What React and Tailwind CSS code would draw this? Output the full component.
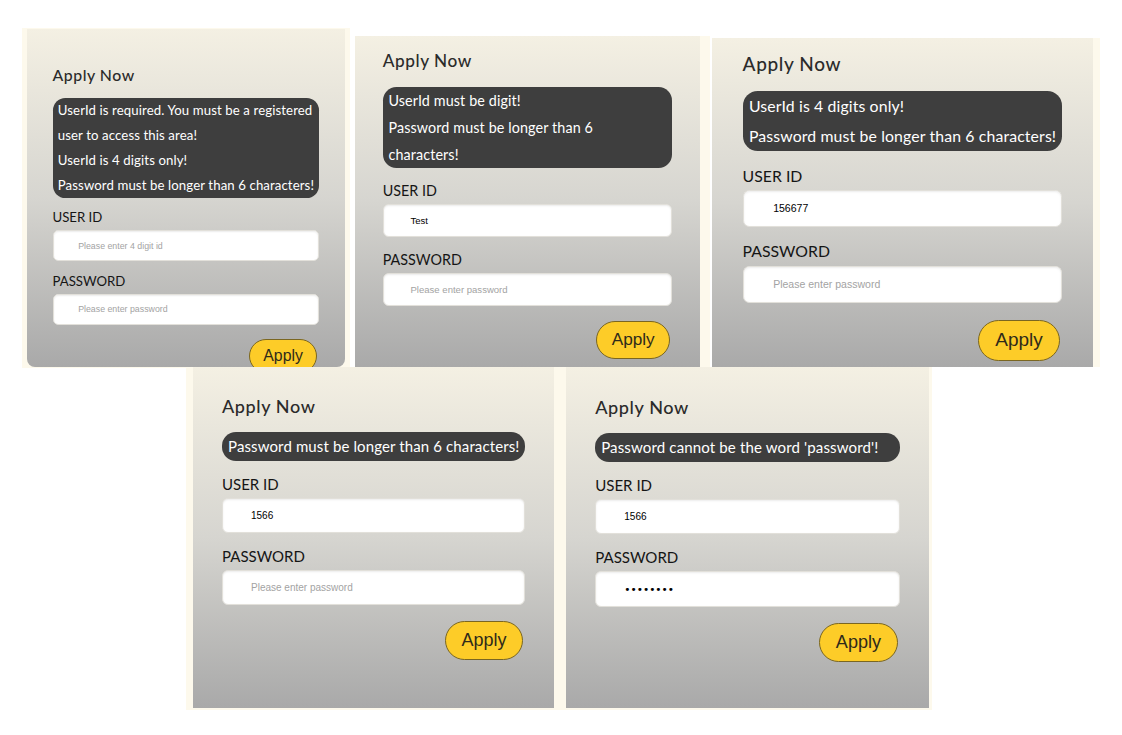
import clsx from 'clsx'

const Panel = ({ zoomCls, padCls, errors, userId, password, userPlaceholder, rounded }) => {
  return (
    <div
      className={clsx(
        'h-full overflow-hidden bg-linear-to-b from-[#f4f0e3] via-[#d6d5d0] to-[#a9a9a9]',
        rounded && 'rounded-b-[8px]'
      )}
    >
      <div className={clsx(zoomCls, padCls, 'w-[332px] pl-[29px] font-["Lato",sans-serif]')}>
        <h2 className="text-[18px] font-medium leading-[24px] tracking-[0.6px] text-[#2b2b2b]">Apply Now</h2>

        {/* error messages */}
        <div className="mt-[14px] w-[303px] rounded-[14px] bg-[#3e3e3e] px-[6px] text-[15px] leading-[28.5px] tracking-[0.12px] text-white">
          {errors.map((line, i) => (
            <div key={i} className="whitespace-nowrap">
              {line}
            </div>
          ))}
        </div>

        <label className="mt-[12px] block text-[15px] leading-[22px] text-[#151515]">USER ID</label>
        <input
          readOnly
          value={userId}
          placeholder={userPlaceholder}
          className="mt-[3px] block h-[35px] w-[303px] rounded-[6px] border border-[#e2e0da] bg-white pl-[28px] font-['Liberation_Sans',Arial,sans-serif] text-[10px] text-black shadow-[inset_0_1px_2px_rgba(0,0,0,0.08)] outline-none placeholder:text-[#a3a3a3]"
        />

        <label className="mt-[12px] block text-[15px] leading-[22px] text-[#151515]">PASSWORD</label>
        <input
          readOnly
          type="password"
          value={password}
          placeholder="Please enter password"
          className={clsx(
            'mt-[3px] block h-[35px] w-[303px] rounded-[6px] border border-[#e2e0da] bg-white pl-[28px] text-black shadow-[inset_0_1px_2px_rgba(0,0,0,0.08)] outline-none placeholder:text-[#a3a3a3]',
            password
              ? "font-['DejaVu_Sans',sans-serif] text-[10.5px]"
              : "font-['Liberation_Sans',Arial,sans-serif] text-[10px]"
          )}
        />

        <div className="mt-[16px] flex w-[303px] justify-end pr-[2px]">
          <button className="h-[39px] w-[78px] rounded-full border border-[#7a6621] bg-[#fdcc28] font-['Liberation_Sans',Arial,sans-serif] text-[18px] text-[#2f2a1a]">
            Apply
          </button>
        </div>
      </div>
    </div>
  )
}

const App = () => {
  return (
    <div className="h-[735px] w-[1122px] overflow-hidden bg-white">
      {/* top row */}
      <div className="flex h-[367px] items-start pt-[28px]">
        <div className="ml-[22px] h-[340px] bg-[#fdf9ec] px-[5px] pt-[1px]">
          <div className="h-[338px] w-[318px]">
            <Panel
              zoomCls="[zoom:0.88]"
              padCls="pt-[40px]"
              rounded
              userId=""
              password=""
              userPlaceholder="Please enter 4 digit id"
              errors={[
                'UserId is required. You must be a registered',
                'user to access this area!',
                'UserId is 4 digits only!',
                'Password must be longer than 6 characters!',
              ]}
            />
          </div>
        </div>

        <div className="ml-[5px] mt-[8px] h-[331px] bg-[#fdf9ec] pr-[10px]">
          <div className="h-[331px] w-[345px]">
            <Panel
              zoomCls="[zoom:0.956]"
              padCls="pt-[15px]"
              userId="Test"
              password=""
              userPlaceholder="Please enter 4 digit id"
              errors={['UserId must be digit!', 'Password must be longer than 6', 'characters!']}
            />
          </div>
        </div>

        <div className="ml-[2px] mt-[10px] h-[329px] bg-[#fdf9ec] pr-[7px]">
          <div className="h-[329px] w-[381px]">
            <Panel
              zoomCls="[zoom:1.055]"
              padCls="pt-[12px]"
              userId="156677"
              password=""
              userPlaceholder="Please enter 4 digit id"
              errors={['UserId is 4 digits only!', 'Password must be longer than 6 characters!']}
            />
          </div>
        </div>
      </div>

      {/* bottom row */}
      <div className="flex pl-[186px]">
        <div className="h-[343px] bg-[#fdf9ec] pl-[7px] pr-[6px]">
          <div className="h-[341px] w-[361px]">
            <Panel
              zoomCls="[zoom:1]"
              padCls="pt-[27px]"
              userId="1566"
              password=""
              userPlaceholder="Please enter 4 digit id"
              errors={['Password must be longer than 6 characters!']}
            />
          </div>
        </div>

        <div className="h-[343px] bg-[#fdf9ec] pl-[6px] pr-[3px]">
          <div className="h-[341px] w-[363px]">
            <Panel
              zoomCls="[zoom:1.005]"
              padCls="pt-[28px]"
              userId="1566"
              password="password"
              userPlaceholder="Please enter 4 digit id"
              errors={["Password cannot be the word 'password'!"]}
            />
          </div>
        </div>
      </div>
    </div>
  )
}

export default App
